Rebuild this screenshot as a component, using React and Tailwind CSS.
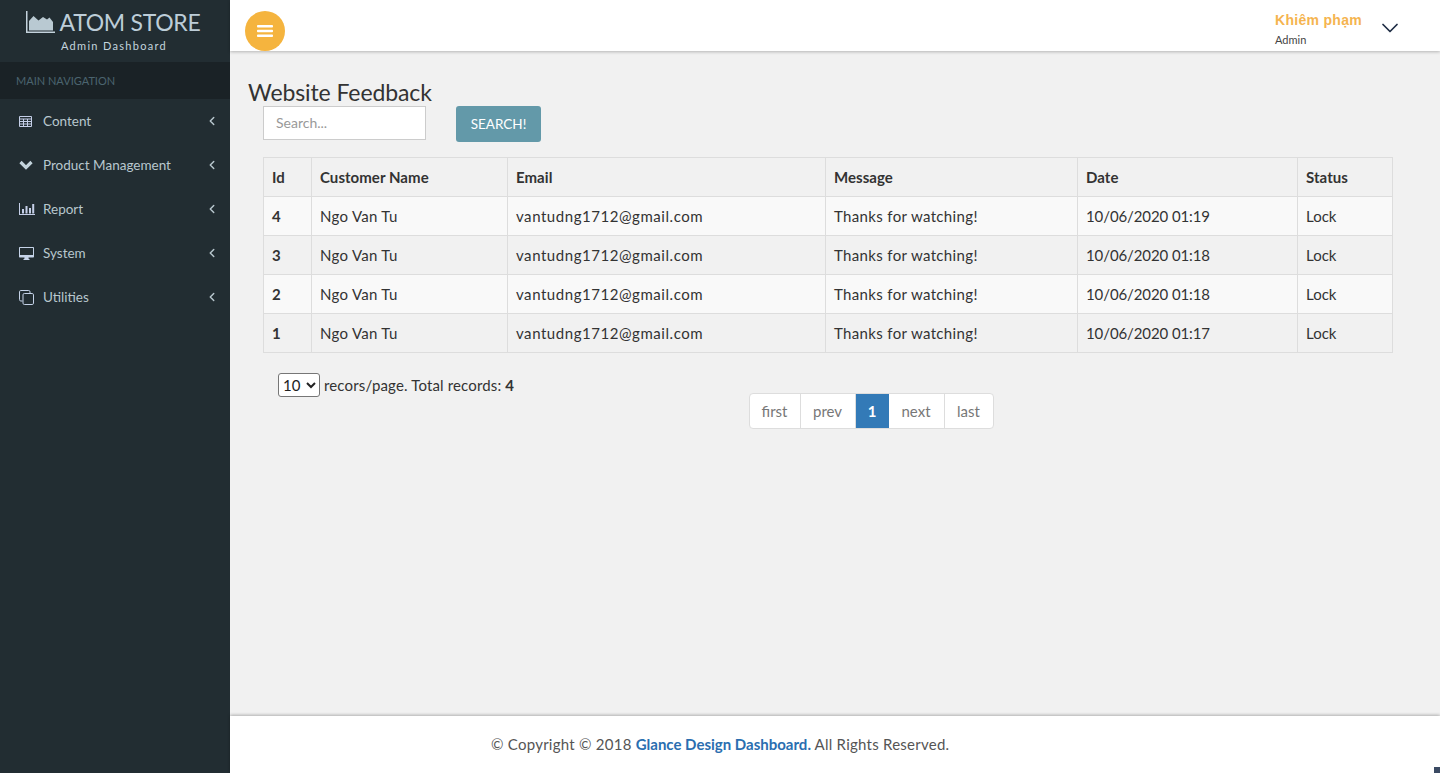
import React from "react";
import { ChevronLeft, ChevronDown } from "lucide-react";

const font = "font-['Lato','Noto_Sans',sans-serif]";

const IconTable = () => (
  <svg width="13" height="11" viewBox="0 0 13 11" className="text-[#c5cfe8]">
    <path fill="none" stroke="currentColor" strokeWidth="1" d="M.5.5h12v10H.5zM.5 3h12M.5 5.500h12M.5 8h12M4.500 3v7.500M8.500 3v7.500" />
  </svg>
);
const IconChevronBold = () => (
  <svg width="14" height="10" viewBox="0 0 14 10" className="text-[#c3d3dc]">
    <path fill="none" stroke="currentColor" strokeWidth="3.200" d="M1.500 2L7 7.400 12.500 2" />
  </svg>
);
const IconChart = () => (
  <svg width="16" height="12" viewBox="0 0 16 12" className="text-[#c5cfe8]">
    <path fill="currentColor" d="M0 0h1v11h15v1H0V0zM3 6h2v4.500H3V6zm3.500-3h2v7.500h-2V3zM10 5h2v5.500h-2V5zm3.200-4h2v9.500h-2V1z" />
  </svg>
);
const IconDesktop = () => (
  <svg width="15" height="13" viewBox="0 0 15 13" className="text-[#c5d3e8]">
    <path fill="currentColor" d="M1 0h13c.6 0 1 .4 1 1v8.500c0 .6-.4 1-1 1H9.500l.2 1.500h.8v1h-6v-1h.8l.2-1.500H1c-.6 0-1-.4-1-1V1c0-.6.4-1 1-1zm0 1v7h13V1H1z" />
  </svg>
);
const IconCopy = () => (
  <svg width="15" height="15" viewBox="0 0 15 15" className="text-[#c5d3e8]">
    <path fill="none" stroke="currentColor" strokeWidth="1" d="M3.500 11H1.800C1 11 .5 10.500.5 9.700V1.800C.5 1 1 .5 1.800.5h7.900c.8 0 1.300.5 1.300 1.300v1.700M5.300 3.500h7.900c.8 0 1.300.5 1.300 1.300v8.400c0 .8-.5 1.300-1.300 1.300H5.300c-.8 0-1.300-.5-1.300-1.300V4.800c0-.8.500-1.300 1.300-1.300z" />
  </svg>
);

const menu = [
  ["Content", <IconTable />],
  ["Product Management", <IconChevronBold />],
  ["Report", <IconChart />],
  ["System", <IconDesktop />],
  ["Utilities", <IconCopy />],
];

const rows = [
  ["4", "10/06/2020 01:19"],
  ["3", "10/06/2020 01:18"],
  ["2", "10/06/2020 01:18"],
  ["1", "10/06/2020 01:17"],
];

const pages = [
  ["first", "w-[51px] border-r border-[#ddd]"],
  ["prev", "w-[55px] border-r border-[#ddd]"],
  ["1", "w-[33px] bg-[#337ab7] font-bold text-white"],
  ["next", "w-[56px] border-r border-[#ddd]"],
  ["last", "w-[48px]"],
];

export default function App() {
  return (
    <div className={`relative flex h-[773px] w-[1440px] overflow-hidden bg-[#f1f1f1] ${font}`}>
      <aside className="flex w-[230px] shrink-0 flex-col bg-[#222d32]">
        <div className="flex h-[62px] flex-col items-center pt-[7px]">
          <div className="flex h-[30px] items-center gap-[5px] pr-[4px]">
            <svg width="29" height="22" viewBox="0 0 29 22">
              <path fill="#c3d2dc" d="M0 0h1.500v20.500H29V22H0V0z" />
              <path fill="#b9c9d2" d="M3 19.500V10L7.500 5l5 4.500L17 6l4 2.500 2.500-2 3.500 4.500v8.500H3z" />
            </svg>
            <span className="text-[23px] leading-[30px] tracking-[-0.3px] text-[#bdcdd8]">ATOM STORE</span>
          </div>
          <div className="mt-[2px] pr-[2px] text-[11px] leading-[14px] tracking-[1.300px] text-[#c3d4de]">Admin Dashboard</div>
        </div>
        <div className="flex h-[37px] items-center bg-[#1a2226] pl-[16px] pt-[1px] text-[11px] text-[#4b646f]">MAIN NAVIGATION</div>
        <nav className="flex flex-col">
          {menu.map(([label, icon]) => (
            <div key={label} className="flex h-[44px] items-center pl-[19px] pr-[11px] text-[13.500px] text-[#b8c7ce]">
              <span className="flex w-[24px] shrink-0 items-center">{icon}</span>
              <span className="flex-1">{label}</span>
              <ChevronLeft size={14} strokeWidth={2.500} className="text-[#b8c7ce]" />
            </div>
          ))}
        </nav>
      </aside>

      <div className="flex min-w-0 flex-1 flex-col">
        <header className="relative z-10 flex h-[51px] shrink-0 items-start justify-between bg-white pl-[15px] pr-[36px] shadow-[0_1px_3px_rgba(0,0,0,0.25)]">
          <button className="mt-[11px] flex h-[40px] w-[40px] items-center justify-center rounded-full bg-[#f5b43e]">
            <svg width="16" height="12" viewBox="0 0 16 12">
              <path fill="#fff" d="M.8 0h14.400c.4 0 .8.400.8.800v.900c0 .4-.4.800-.8.800H.8C.4 2.500 0 2.100 0 1.700V.8C0 .4.400 0 .8 0zm0 4.800h14.400c.4 0 .8.400.8.800v.9c0 .4-.4.800-.8.800H.8c-.4 0-.8-.4-.8-.8v-.9c0-.4.400-.8.800-.8zm0 4.700h14.400c.4 0 .8.400.8.800v.9c0 .4-.4.800-.8.800H.8c-.4 0-.8-.4-.8-.8v-.9c0-.4.400-.8.800-.8z" />
            </svg>
          </button>
          <div className="flex items-start">
            <div className="mr-[14px] flex flex-col pt-[11px]">
              <span className="font-['Liberation_Sans',sans-serif] text-[14px] font-bold leading-[18px] tracking-[0.3px] text-[#f5b44f]">Khiêm phạm</span>
              <span className="mt-[4px] text-[11px] leading-[14px] text-[#444]">Admin</span>
            </div>
            <ChevronDown size={28} strokeWidth={1.500} className="mt-[14px] text-[#1f2d45]" />
          </div>
        </header>

        <main className="flex-1 pl-[18px] pr-[47px] pt-[28px]">
          <h2 className="text-[23px] leading-[27px] tracking-[-0.1px] text-[#333]">Website Feedback</h2>
          <div className="pl-[15px]">
            <div className="flex items-start gap-[30px]">
              <input
                placeholder="Search..."
                className="h-[34px] w-[163px] border border-[#ccc] bg-white px-[12px] pb-[2px] text-[14px] text-[#555] outline-none placeholder:text-[#999]"
              />
              <button className="h-[36px] w-[85px] rounded-[3px] bg-[#6399a9] text-[13.500px] text-white">SEARCH!</button>
            </div>
            <table className="mt-[15px] w-[1129px] table-fixed border-collapse text-[15px] text-[#333]">
              <colgroup>
                <col className="w-[48px]" />
                <col className="w-[196px]" />
                <col className="w-[318px]" />
                <col className="w-[252px]" />
                <col className="w-[220px]" />
                <col className="w-[95px]" />
              </colgroup>
              <thead>
                <tr className="h-[39px] bg-[#f1f1f1]">
                  {["Id", "Customer Name", "Email", "Message", "Date", "Status"].map((h) => (
                    <th key={h} className="border border-[#ddd] px-[8px] text-left font-bold tracking-[0.05px]">{h}</th>
                  ))}
                </tr>
              </thead>
              <tbody>
                {rows.map(([id, date], i) => (
                  <tr key={id} className={`h-[39px] ${i % 2 === 0 ? "bg-[#f9f9f9]" : "bg-[#f1f1f1]"}`}>
                    <td className="border border-[#ddd] px-[8px] font-bold">{id}</td>
                    <td className="border border-[#ddd] px-[8px] tracking-[0.3px]">Ngo Van Tu</td>
                    <td className="border border-[#ddd] px-[8px] tracking-[0.55px]">vantudng1712@gmail.com</td>
                    <td className="border border-[#ddd] px-[8px] tracking-[0.35px]">Thanks for watching!</td>
                    <td className="border border-[#ddd] px-[8px] tracking-[-0.1px]">{date}</td>
                    <td className="border border-[#ddd] px-[8px]">Lock</td>
                  </tr>
                ))}
              </tbody>
            </table>
            <div className="mt-[20px] h-[60px] w-[1129px]">
              <div className="flex items-center pl-[15px] text-[15px] text-[#333]">
                <select className="mr-[4px] h-[24px] w-[42px] rounded-[3px] border border-[#767676] bg-white text-[15px] text-[#222]">
                  <option>10</option>
                </select>
                <span className="tracking-[0.15px]">recors/page. Total records: <b>4</b></span>
              </div>
              <div className="mt-[-4px] flex justify-center pl-[87px]">
                <div className="flex h-[36px] overflow-hidden rounded-[4px] border border-[#ddd] bg-white text-[15px] text-[#777]">
                  {pages.map(([p, cls]) => (
                    <span key={p} className={`flex items-center justify-center ${cls}`}>{p}</span>
                  ))}
                </div>
              </div>
            </div>
          </div>
        </main>

        <footer className="flex h-[57px] shrink-0 items-center bg-white pb-[1px] pl-[261px] text-[15px] tracking-[0.25px] text-[#555] shadow-[0_-1px_3px_rgba(0,0,0,0.28)]">
          <span>© Copyright © 2018 <b className="tracking-normal text-[#2a6eb0]">Glance Design Dashboard.</b> All Rights Reserved.</span>
        </footer>
      </div>
      <div className="absolute bottom-0 right-0 h-[6px] w-[6px] bg-[#3b4a63]" />
    </div>
  );
}
